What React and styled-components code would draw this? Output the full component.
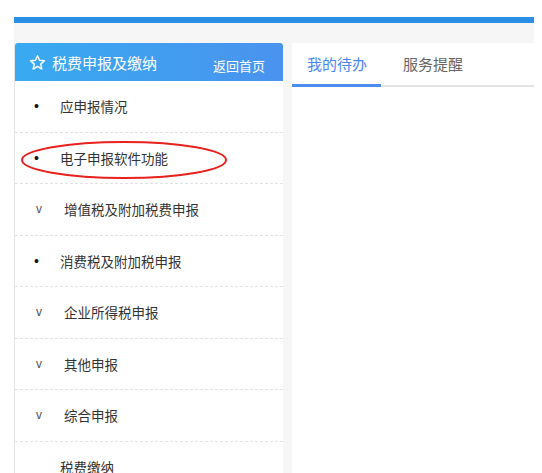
import React from "react";
import styled, { createGlobalStyle } from "styled-components";

const Global = createGlobalStyle`
  html, body { margin: 0; padding: 0; background: #fff; }
  body { font-family: "Microsoft YaHei", "Noto Sans CJK SC", "Liberation Sans", sans-serif; overflow: hidden; }
`;

const Page = styled.div`
  padding: 17px 8px 0 14px;
  height: 473px;
  box-sizing: border-box;
  display: flex;
  flex-direction: column;
  overflow: hidden;
`;

const TopBar = styled.div`
  height: 6px;
  background: #2b8fe5;
  flex-shrink: 0;
`;

const Body = styled.div`
  flex: 1;
  background: #f6f6f6;
  padding-top: 20px;
  display: flex;
  gap: 9px;
  min-height: 0;
`;

const Sidebar = styled.div`
  width: 269px;
  background: #fff;
  border-left: 1px solid #e6e6e6;
  box-sizing: border-box;
  display: flex;
  flex-direction: column;
  overflow: hidden;
`;

const SideHeader = styled.div`
  height: 38px;
  flex-shrink: 0;
  background: linear-gradient(90deg, #38aaf1 0%, #4a93ee 100%);
  border-radius: 3px 3px 0 0;
  display: flex;
  align-items: center;
  padding: 0 18px 0 14px;
  color: #fff;
`;

const Title = styled.div`
  display: flex;
  align-items: center;
  gap: 6px;
  font-size: 15px;
  flex: 1;
`;

const BackLink = styled.div`
  font-size: 13px;
  margin-top: 6px;
`;

const Row = styled.div`
  position: relative;
  height: 51.5px;
  box-sizing: border-box;
  border-bottom: 1px dashed #e2e2e2;
  display: flex;
  align-items: center;
  padding-left: ${(p) => (p.$caret ? "21px" : "19px")};
  font-size: 13.5px;
  color: #333;
  flex-shrink: 0;
`;

const Marker = styled.span`
  width: ${(p) => (p.$caret ? "28px" : "26px")};
  font-size: ${(p) => (p.$caret ? "12px" : "14px")};
  color: ${(p) => (p.$caret ? "#555" : "#111")};
  font-family: "Liberation Sans", sans-serif;
`;

const Ellipse = styled.svg`
  position: absolute;
  left: 5px;
  top: 7px;
  pointer-events: none;
`;

const Main = styled.div`
  flex: 1;
  background: #fff;
`;

const Tabs = styled.div`
  display: flex;
  height: 42px;
  border-bottom: 2px solid #e4e4e4;
`;

const Tab = styled.div`
  width: ${(p) => (p.$active ? "89px" : "auto")};
  padding-left: ${(p) => (p.$active ? "15px" : "22px")};
  box-sizing: border-box;
  font-size: 15px;
  color: ${(p) => (p.$active ? "#4a86ee" : "#666")};
  display: flex;
  align-items: center;
  border-bottom: 3px solid ${(p) => (p.$active ? "#4a8cef" : "transparent")};
  margin-bottom: -2px;
`;

const items = [
  { t: "应申报情况", caret: false },
  { t: "电子申报软件功能", caret: false, circled: true },
  { t: "增值税及附加税费申报", caret: true },
  { t: "消费税及附加税申报", caret: false },
  { t: "企业所得税申报", caret: true },
  { t: "其他申报", caret: true },
  { t: "综合申报", caret: true },
  { t: "税费缴纳", caret: false, noMark: true },
];

export default function App() {
  return (
    <>
      <Global />
      <Page>
        <TopBar />
        <Body>
          <Sidebar>
            <SideHeader>
              <Title>
                <svg width="17" height="17" viewBox="0 0 24 24" fill="none" stroke="#fff" strokeWidth="2" strokeLinejoin="round">
                  <polygon points="12,2.5 14.9,8.9 21.8,9.6 16.6,14.3 18.1,21.2 12,17.6 5.9,21.2 7.4,14.3 2.2,9.6 9.1,8.9" />
                </svg>
                税费申报及缴纳
              </Title>
              <BackLink>返回首页</BackLink>
            </SideHeader>
            {items.map((it) => (
              <Row key={it.t} $caret={it.caret}>
                <Marker $caret={it.caret}>{it.noMark ? "" : it.caret ? "v" : "•"}</Marker>
                {it.t}
                {it.circled && (
                  <Ellipse width="212" height="40" viewBox="0 0 212 40">
                    <ellipse cx="104" cy="20" rx="102" ry="18" fill="none" stroke="#e8211c" strokeWidth="2" />
                  </Ellipse>
                )}
              </Row>
            ))}
          </Sidebar>
          <Main>
            <Tabs>
              <Tab $active>我的待办</Tab>
              <Tab>服务提醒</Tab>
            </Tabs>
          </Main>
        </Body>
      </Page>
    </>
  );
}
